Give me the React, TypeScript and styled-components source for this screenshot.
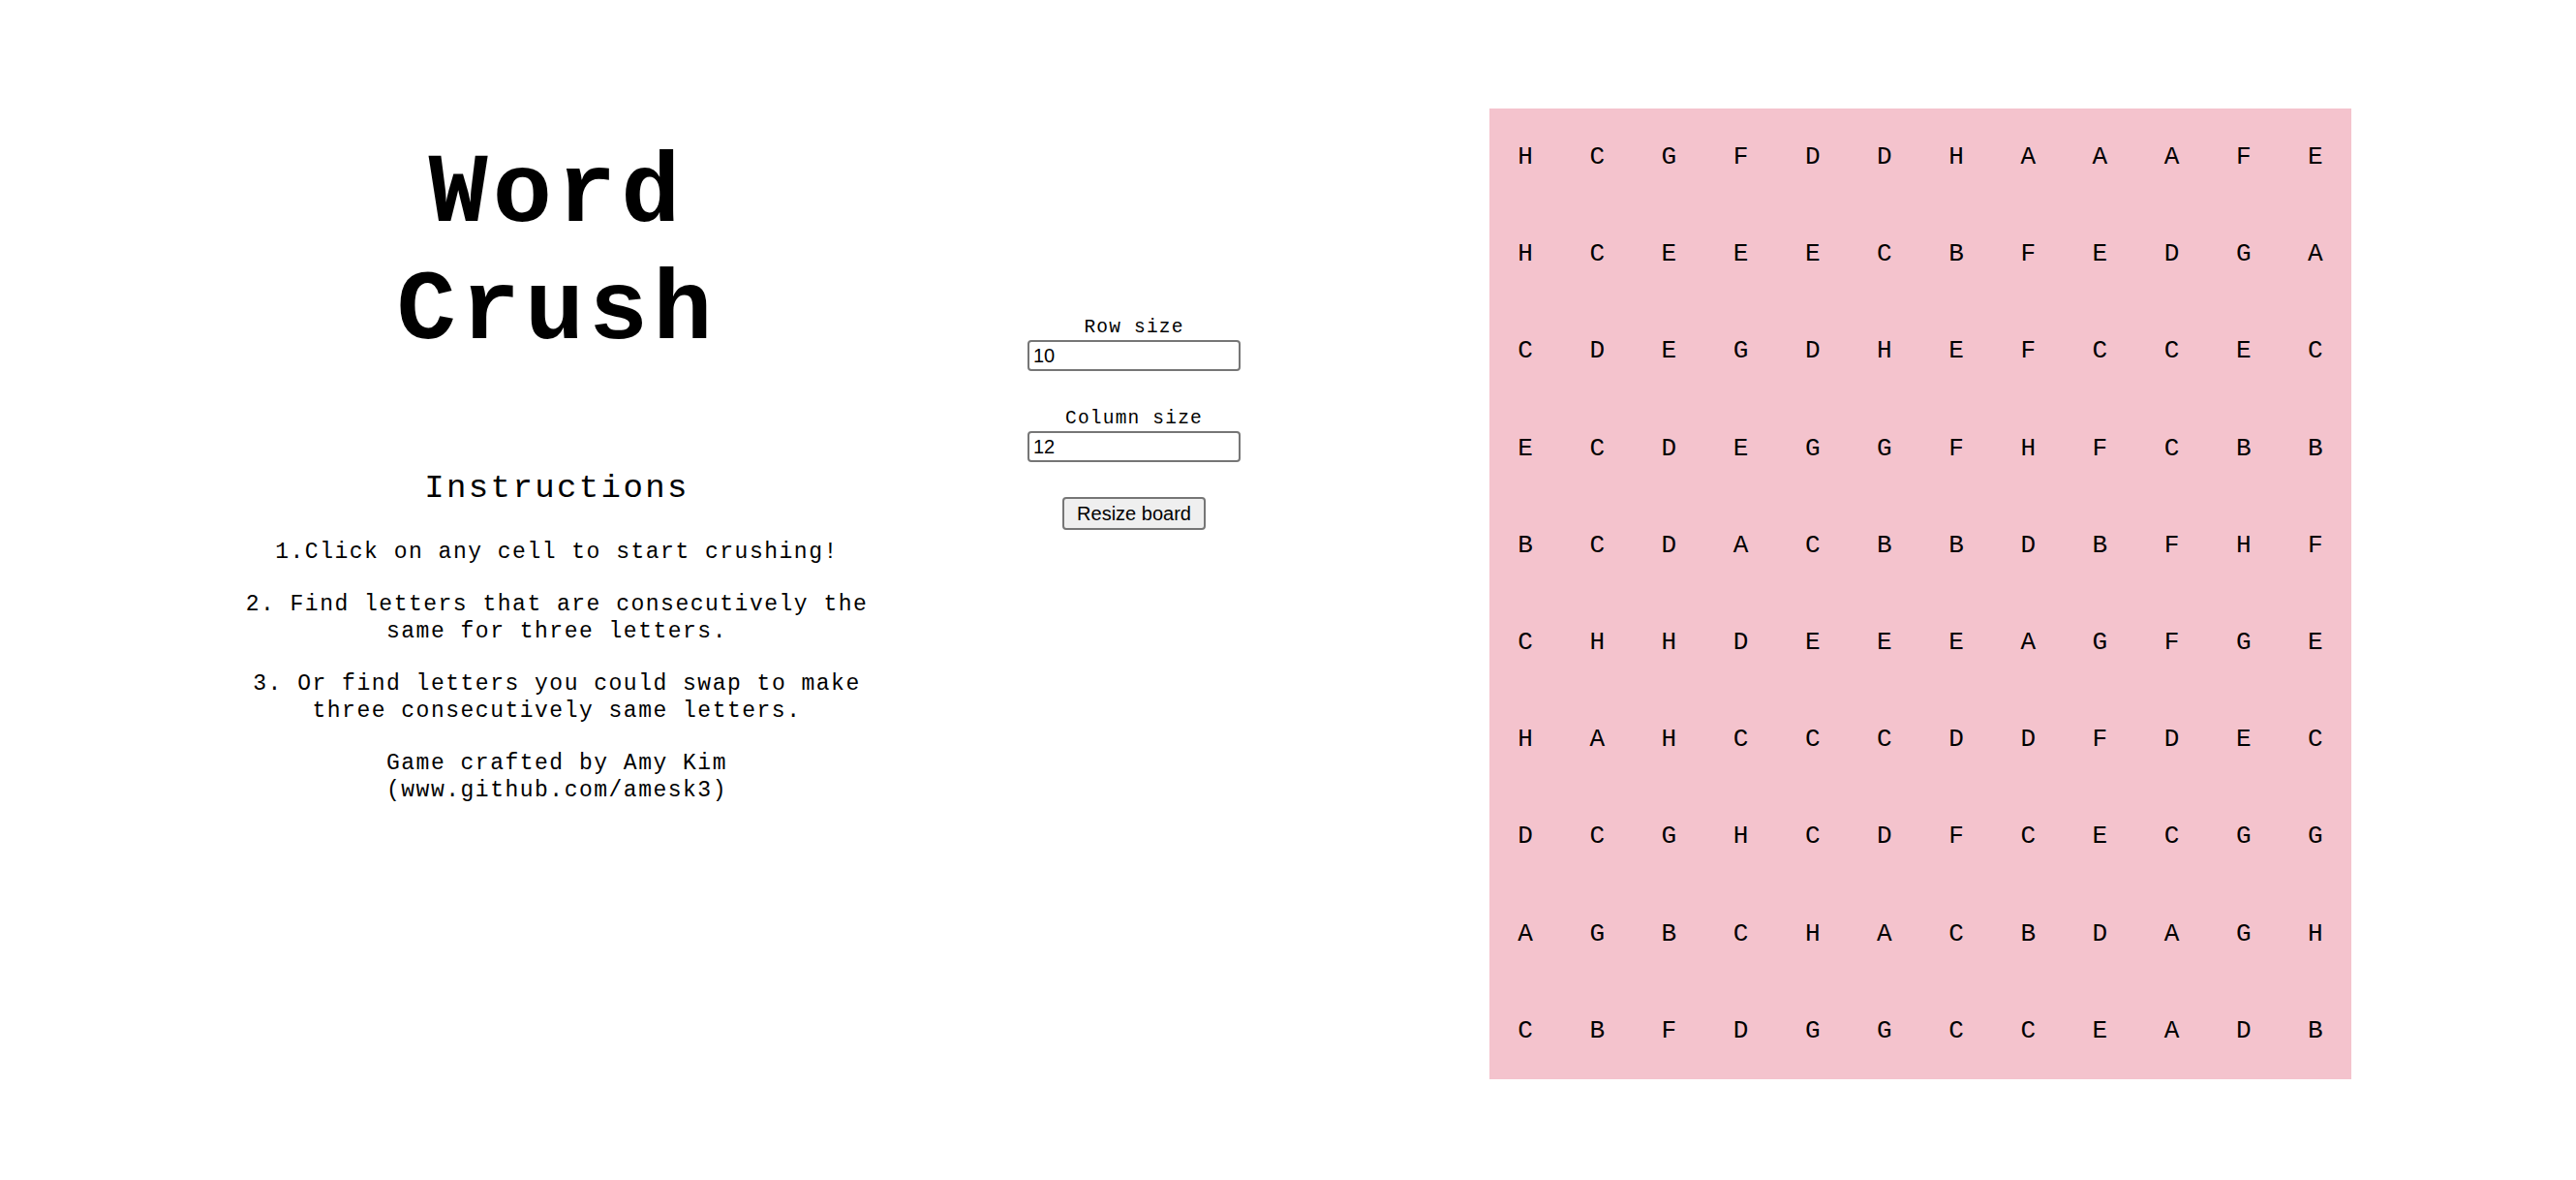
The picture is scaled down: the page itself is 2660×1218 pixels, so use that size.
import React from "react";
import styled, { createGlobalStyle } from "styled-components";

const GlobalStyle = createGlobalStyle`
  html, body {
    margin: 0;
    padding: 0;
    background: #ffffff;
    color: #000000;
    font-family: "Liberation Mono", "DejaVu Sans Mono", monospace;
  }
`;

const Page = styled.main`
  display: flex;
  align-items: flex-start;
  padding-left: 195px;
  min-height: 1218px;
  box-sizing: border-box;
`;

const InfoColumn = styled.section`
  width: 760px;
  padding-top: 141px;
  display: flex;
  flex-direction: column;
  align-items: center;
  text-align: center;
`;

const Title = styled.h1`
  margin: 0;
  font-family: "Liberation Mono", monospace;
  font-weight: 700;
  font-size: 102px;
  letter-spacing: 5px;
  line-height: 121px;
`;

const Heading = styled.h2`
  margin: 99px 0 0;
  font-family: "Liberation Mono", monospace;
  font-weight: 400;
  font-size: 34px;
  letter-spacing: 2.4px;
  line-height: 44px;
`;

const Steps = styled.div`
  width: 680px;
  margin-top: 30px;
  display: flex;
  flex-direction: column;
  gap: 26px;
`;

const Step = styled.p`
  margin: 0;
  font-family: "Liberation Mono", monospace;
  font-size: 23px;
  letter-spacing: 1.5px;
  line-height: 28px;
`;

const ControlColumn = styled.section`
  width: 340px;
  margin-left: 46px;
  padding-top: 326px;
  display: flex;
  flex-direction: column;
  align-items: center;
`;

const Field = styled.label<{ $gap?: number }>`
  display: flex;
  flex-direction: column;
  align-items: center;
  margin-bottom: ${(p) => p.$gap ?? 0}px;
`;

const FieldLabel = styled.span`
  font-family: "Liberation Mono", monospace;
  font-size: 19.5px;
  letter-spacing: 1.2px;
  line-height: 24px;
  height: 24px;
  margin-bottom: 1px;
`;

const SizeInput = styled.input`
  width: 220px;
  height: 32px;
  box-sizing: border-box;
  border: 2px solid #767676;
  border-radius: 4px;
  padding: 0 4px;
  font-family: "Liberation Sans", Arial, sans-serif;
  font-size: 20px;
  color: #000;
  background: #fff;
  outline: none;
`;

const ResizeButton = styled.button`
  width: 148px;
  height: 34px;
  box-sizing: border-box;
  border: 2px solid #767676;
  border-radius: 4px;
  background: #efefef;
  font-family: "Liberation Sans", Arial, sans-serif;
  font-size: 20px;
  color: #000;
  padding: 0;
  cursor: pointer;
`;

const Board = styled.div<{ $cols: number; $rows: number }>`
  margin-left: 197px;
  margin-top: 112px;
  width: 890px;
  height: 1002px;
  background: #f4c3cd;
  display: grid;
  grid-template-columns: repeat(${(p) => p.$cols}, 1fr);
  grid-template-rows: repeat(${(p) => p.$rows}, 1fr);
`;

const Cell = styled.div`
  display: flex;
  align-items: center;
  justify-content: center;
  font-family: "Liberation Mono", monospace;
  font-size: 26px;
  color: #000;
  cursor: pointer;
  user-select: none;
`;

const rows = [
  "HCGFDDHAAAFE",
  "HCEEECBFEDGA",
  "CDEGDHEFCCEC",
  "ECDEGGFHFCBB",
  "BCDACBBDBFHF",
  "CHHDEEEAGFGE",
  "HAHCCCDDFDEC",
  "DCGHCDFCECGG",
  "AGBCHACBDAGH",
  "CBFDGGCCEADB",
];

export default function App() {
  return (
    <>
      <GlobalStyle />
      <Page>
        <InfoColumn>
          <Title>
            Word
            <br />
            Crush
          </Title>
          <Heading>Instructions</Heading>
          <Steps>
            <Step>1.Click on any cell to start crushing!</Step>
            <Step>2. Find letters that are consecutively the same for three letters.</Step>
            <Step>3. Or find letters you could swap to make three consecutively same letters.</Step>
            <Step>Game crafted by Amy Kim (www.github.com/amesk3)</Step>
          </Steps>
        </InfoColumn>
        <ControlColumn>
          <Field $gap={37}>
            <FieldLabel>Row size</FieldLabel>
            <SizeInput type="text" defaultValue="10" />
          </Field>
          <Field $gap={36}>
            <FieldLabel>Column size</FieldLabel>
            <SizeInput type="text" defaultValue="12" />
          </Field>
          <ResizeButton type="button">Resize board</ResizeButton>
        </ControlColumn>
        <Board $cols={12} $rows={10}>
          {rows.flatMap((row, r) =>
            row.split("").map((ch, c) => <Cell key={`${r}-${c}`}>{ch}</Cell>)
          )}
        </Board>
      </Page>
    </>
  );
}
